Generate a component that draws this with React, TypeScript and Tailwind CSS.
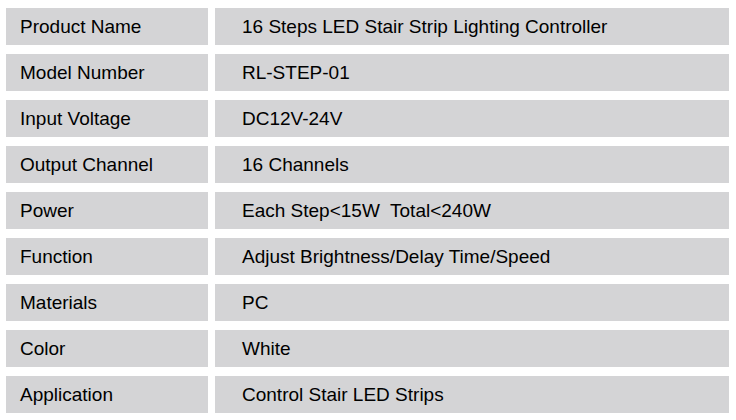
const rows: [string, string][] = [
  ['Product Name', '16 Steps LED Stair Strip Lighting Controller'],
  ['Model Number', 'RL-STEP-01'],
  ['Input Voltage', 'DC12V-24V'],
  ['Output Channel', '16 Channels'],
  ['Power', 'Each Step<15W  Total<240W'],
  ['Function', 'Adjust Brightness/Delay Time/Speed'],
  ['Materials', 'PC'],
  ['Color', 'White'],
  ['Application', 'Control Stair LED Strips'],
]

export default function App() {
  return (
    <div className="w-[736px] h-[420px] bg-white pt-[8px] pl-[6px] overflow-hidden" style={{ fontFamily: '"Liberation Sans", Arial, sans-serif' }}>
      <div className="flex flex-col gap-[9px]">
        {rows.map(([label, value]) => (
          <div key={label} className="grid grid-cols-[202px_514px] gap-[7px] h-[37px] text-[19px] text-black">
            <div className="bg-[#d4d4d6] flex items-center pl-[14px] pt-[2px]">{label}</div>
            <div className="bg-[#d4d4d6] flex items-center pl-[27px] pt-[2px] whitespace-pre">{value}</div>
          </div>
        ))}
      </div>
    </div>
  )
}
